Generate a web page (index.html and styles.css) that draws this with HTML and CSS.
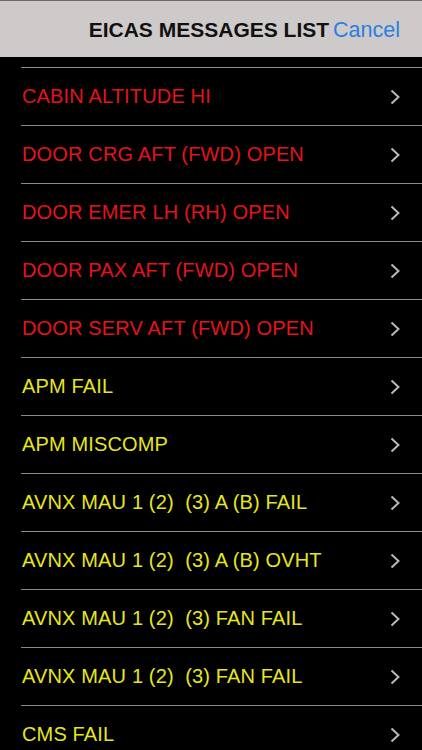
FILE: index.html
```html
<!DOCTYPE html>
<html>
<head>
<meta charset="utf-8">
<link rel="stylesheet" href="styles.css">
</head>
<body>
<div class="header">
  <span class="title">EICAS MESSAGES LIST</span>
  <span class="cancel">Cancel</span>
</div>
<div class="list">
  <div class="row red"><span class="label">CABIN ALTITUDE HI</span><svg class="chev" viewBox="0 0 10 16"><path d="M1.5 1.5 L8.5 8 L1.5 14.5"/></svg></div>
  <div class="row red"><span class="label">DOOR CRG AFT (FWD) OPEN</span><svg class="chev" viewBox="0 0 10 16"><path d="M1.5 1.5 L8.5 8 L1.5 14.5"/></svg></div>
  <div class="row red"><span class="label">DOOR EMER LH (RH) OPEN</span><svg class="chev" viewBox="0 0 10 16"><path d="M1.5 1.5 L8.5 8 L1.5 14.5"/></svg></div>
  <div class="row red"><span class="label">DOOR PAX AFT (FWD) OPEN</span><svg class="chev" viewBox="0 0 10 16"><path d="M1.5 1.5 L8.5 8 L1.5 14.5"/></svg></div>
  <div class="row red"><span class="label">DOOR SERV AFT (FWD) OPEN</span><svg class="chev" viewBox="0 0 10 16"><path d="M1.5 1.5 L8.5 8 L1.5 14.5"/></svg></div>
  <div class="row yellow"><span class="label">APM FAIL</span><svg class="chev" viewBox="0 0 10 16"><path d="M1.5 1.5 L8.5 8 L1.5 14.5"/></svg></div>
  <div class="row yellow"><span class="label">APM MISCOMP</span><svg class="chev" viewBox="0 0 10 16"><path d="M1.5 1.5 L8.5 8 L1.5 14.5"/></svg></div>
  <div class="row yellow"><span class="label">AVNX MAU 1 (2)&nbsp; (3) A (B) FAIL</span><svg class="chev" viewBox="0 0 10 16"><path d="M1.5 1.5 L8.5 8 L1.5 14.5"/></svg></div>
  <div class="row yellow"><span class="label">AVNX MAU 1 (2)&nbsp; (3) A (B) OVHT</span><svg class="chev" viewBox="0 0 10 16"><path d="M1.5 1.5 L8.5 8 L1.5 14.5"/></svg></div>
  <div class="row yellow"><span class="label">AVNX MAU 1 (2)&nbsp; (3) FAN FAIL</span><svg class="chev" viewBox="0 0 10 16"><path d="M1.5 1.5 L8.5 8 L1.5 14.5"/></svg></div>
  <div class="row yellow"><span class="label">AVNX MAU 1 (2)&nbsp; (3) FAN FAIL</span><svg class="chev" viewBox="0 0 10 16"><path d="M1.5 1.5 L8.5 8 L1.5 14.5"/></svg></div>
  <div class="row yellow"><span class="label">CMS FAIL</span><svg class="chev" viewBox="0 0 10 16"><path d="M1.5 1.5 L8.5 8 L1.5 14.5"/></svg></div>
</div>
</body>
</html>
```
FILE: styles.css
```css
html, body {
  margin: 0;
  padding: 0;
  background: #000;
  height: 750px;
  overflow: hidden;
  font-family: "Liberation Sans", Arial, sans-serif;
}
.header {
  height: 57px;
  background: #cecaca;
  border-top: 1px solid #6a6a6a;
  box-sizing: border-box;
  display: flex;
  align-items: center;
  justify-content: flex-end;
  padding: 2px 22px 0 0;
  gap: 4px;
}
.title {
  font-size: 21px;
  font-weight: bold;
  color: #111;
}
.cancel {
  font-size: 21.5px;
  color: #2b7fe3;
}
.list {
  padding-top: 10px;
  padding-left: 21px;
}
.row {
  height: 57px;
  border-top: 1px solid #8a8a8a;
  display: flex;
  align-items: center;
  justify-content: space-between;
  padding-right: 22px;
}
.label {
  font-size: 20px;
  letter-spacing: 0.15px;
  padding-left: 1px;
  white-space: pre;
}
.red .label { color: #e3141b; }
.yellow .label { color: #e6e61e; }
.chev {
  width: 10px;
  height: 16px;
  fill: none;
  stroke: #b8b8b8;
  stroke-width: 2;
}
```
